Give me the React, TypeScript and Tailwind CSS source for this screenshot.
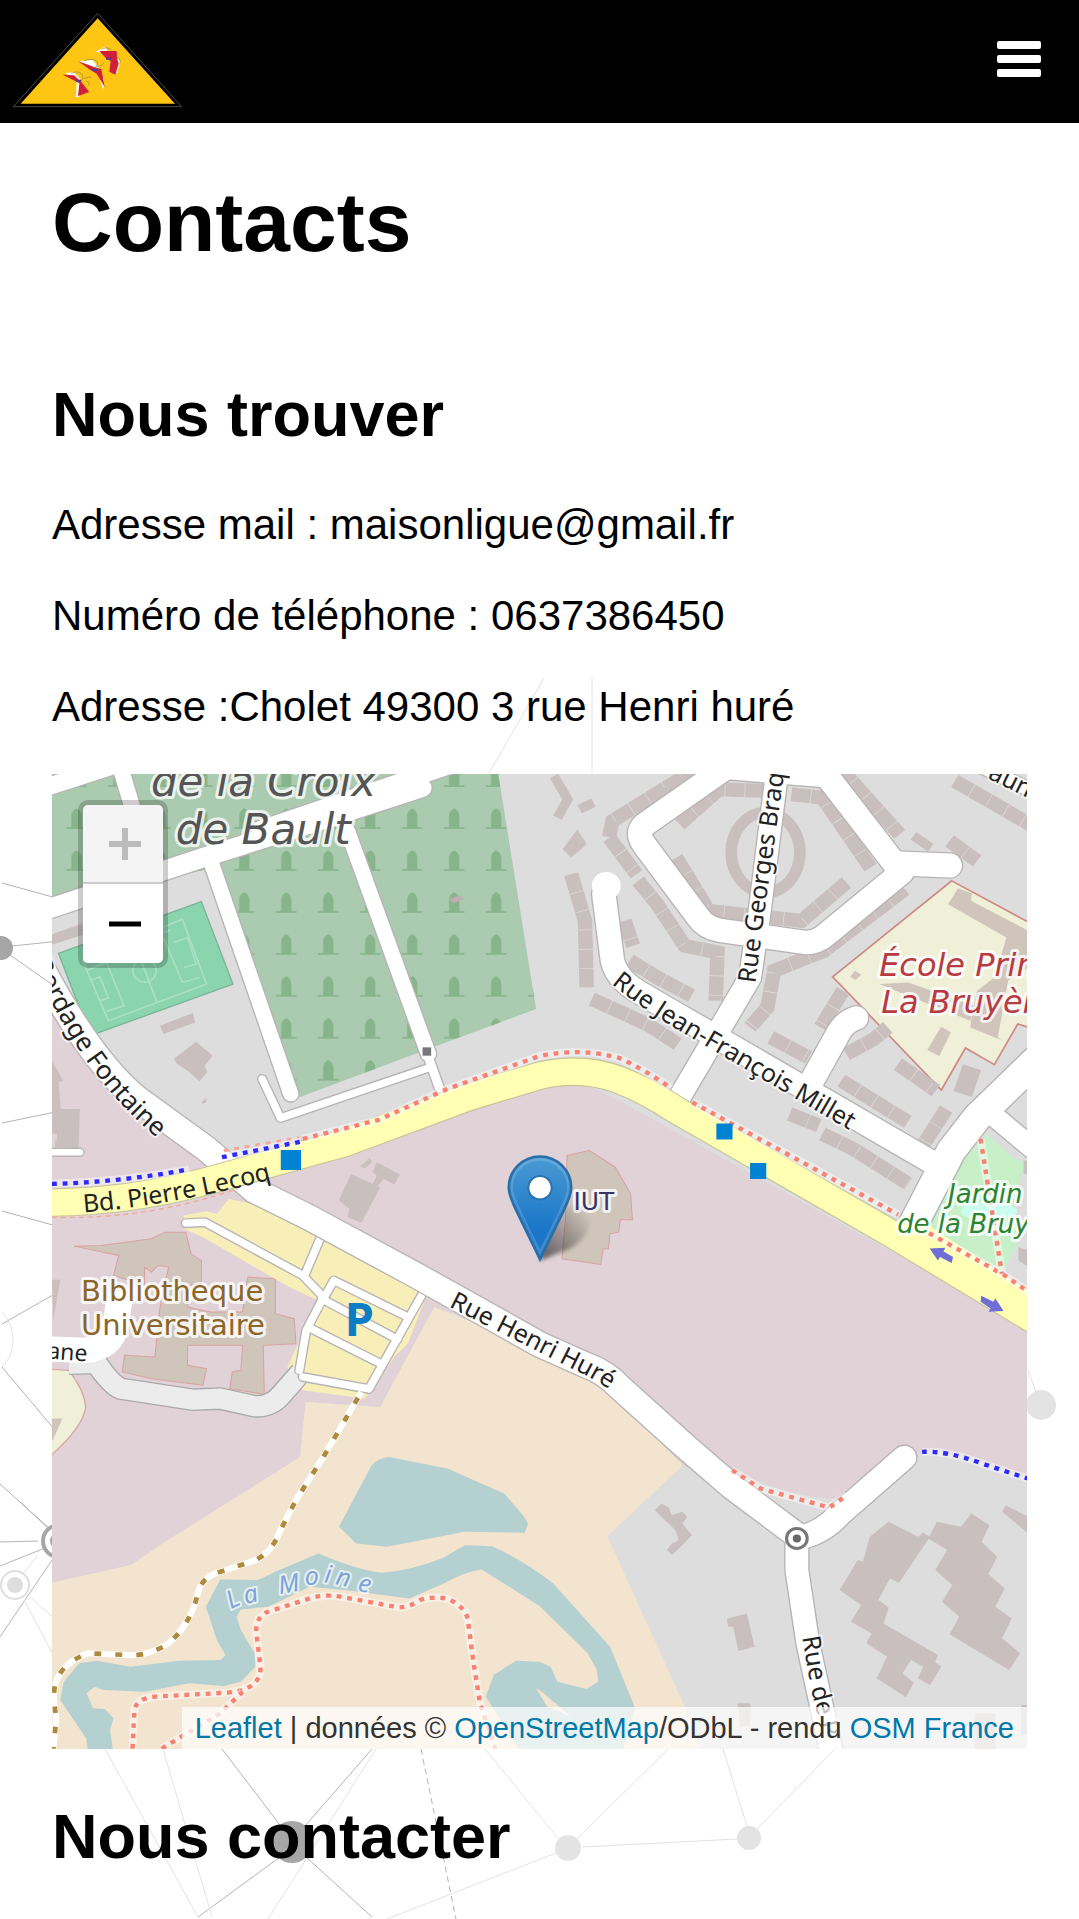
import React from "react";

const BUILDING = "#cabfbf";
const CAMPUS = "#cfc5bb";
const CASING = "#b8b4b4";

function Logo() {
  return (
    <svg viewBox="0 0 510 288" className="h-[96px] w-[170px]" role="img" aria-label="Maison des ligues">
      <g transform="translate(-36 -36)">
        <path d="M293 40L40 320H545Z" fill="#000" stroke="#4a4a4a" strokeWidth="3" />
        <path d="M293 55L62 311H525Z" fill="#fec613" />
        <g fill="#fff">
          <path d="M196 219l26-2 20 22-6 8zM230 246l10 4-2 40-10 2z" />
          <path d="M236 184l42-4 20 24-10 8zM300 238l12-4-2 38z" />
          <path d="M286 156l28-16 8 10-10 8zM346 170l14 14-8 34-12 8z" />
        </g>
        <g fill="#d0213a">
          <path d="M188 224l34 2 22 20 24 30-34 12 4-38-14-8z" />
          <path d="M234 183l48 18 22 6 10 54-24-40-20-12z" />
          <path d="M298 153l52 0 2 24 4 14-10 34-18-10 4-32-14-8z" />
        </g>
        <g fill="none" stroke="#7d8a4a" strokeWidth="2">
          <path d="M214 220q24-10 32 4t-8 20M252 236q16-8 22-4M258 244q14 0 8 14M252 182q24-8 36 0t-6 26M290 200q16 0 22-12M304 148q16-10 30 2M348 168q16 8 12 20" />
        </g>
        <path d="M228 242h16M276 210h16M318 176h16" stroke="#5a3a88" strokeWidth="6" />
      </g>
    </svg>
  );
}

function Network() {
  return (
    <svg
      viewBox="0 0 1079 1919"
      preserveAspectRatio="xMidYMin slice"
      className="absolute inset-0 -z-10 h-full w-full"
      aria-hidden="true"
      fill="none"
    >
      <path
        stroke="#b4b4b4"
        d="M2 883L60 899M12 946L60 941M10 955L60 990M2 1123L60 1111M2 1211L60 1227M2 1324L60 1291M2 1367L60 1436M0 1484L50 1529M18 1500L50 1530M0 1542L38 1541M0 1566L45 1548M52 1560L0 1637M222 1749L280 1825M372 1749L305 1826M198 1917L280 1857M372 1917L306 1857"
      />
      <path stroke="#b4b4b4" strokeDasharray="6 4" d="M421 1749L456 1919" />
      <path
        stroke="#e2e2e2"
        d="M544 678L489 773M592 678V773M2 1312Q14 1326 13 1342T2 1367M28 1595L56 1620M24 1600L56 1660M105 1749L198 1917M163 1749L212 1917M376 1749L268 1919M485 1749L558 1838M668 1749L578 1838M582 1847L737 1839M723 1749L747 1826M835 1749L757 1829M387 1919L556 1853M1028 1370L1036 1392M38 1555L22 1575"
      />
      <circle cx="1" cy="948" r="12" fill="#a6a6a6" />
      <circle cx="292" cy="1842" r="21" fill="#a6a6a6" />
      <circle cx="59" cy="1541" r="16" stroke="#a6a6a6" strokeWidth="4" />
      <circle cx="59" cy="1541" r="9" fill="#a6a6a6" />
      <circle cx="15" cy="1585" r="14" stroke="#dedede" strokeWidth="2" />
      <circle cx="15" cy="1585" r="8" fill="#dedede" />
      <circle cx="568" cy="1848" r="13" fill="#e3e3e3" />
      <circle cx="749" cy="1838" r="12" fill="#e3e3e3" />
      <circle cx="1041" cy="1405" r="15" fill="#e3e3e3" />
    </svg>
  );
}

type Street = { d: string; w: number };

const streets: Street[] = [
  { d: "M100 458L590 290L850 205L1225 80", w: 58 },
  { d: "M760 205L1400 -20", w: 52 },
  { d: "M100 90L340 10", w: 52 },
  { d: "M350 20L440 330", w: 46 },
  { d: "M612 300L845 1000", w: 44 },
  { d: "M1010 210L1245 880", w: 44 },
  { d: "M1245 890L1290 1020", w: 26 },
  { d: "M762 955L815 1072L1250 920", w: 22 },
  { d: "M110 1175H232", w: 20 },
  { d: "M110 600Q190 760 270 870T420 1030L600 1165L740 1290L900 1372L1210 1545L1568 1752L1698 1812Q1760 1835 1800 1880L1988 2055L2128 2180L2316 2325", w: 74 },
  { d: "M2316 2335Q2390 2320 2440 2262L2628 2092", w: 70 },
  { d: "M2316 2330V2430L2348 2650L2430 3040", w: 66 },
  { d: "M2058 15L2408 45", w: 70 },
  { d: "M2110 20L1875 190Q1845 215 1875 255L2030 470Q2050 500 2090 508L2340 545Q2375 545 2400 522L2620 335L2370 0", w: 70 },
  { d: "M2613 308L2760 314", w: 72 },
  { d: "M2265 -20L2208 450L2180 650L1975 1010", w: 64 },
  { d: "M1762 375L1755 400L1780 600Q1790 650 1850 690L2700 1200", w: 68 },
  { d: "M2488 772Q2450 785 2430 830L2360 960", w: 70 },
  { d: "M3040 870L2840 1070L2765 1170L2655 1390", w: 84 },
  { d: "M2870 1050L3020 1180", w: 60 },
  { d: "M2780 -20L3020 100", w: 40 },
];

const lots: Street[] = [
  { d: "M540 1388L595 1385L880 1545L940 1610L890 1710L870 1830", w: 22 },
  { d: "M932 1430L885 1545", w: 22 },
  { d: "M940 1615L970 1560L1185 1670", w: 22 },
  { d: "M935 1615L1155 1737", w: 22 },
  { d: "M905 1705L1110 1812", w: 22 },
  { d: "M880 1850L1072 1886L1225 1605", w: 22 },
];

function Streets({ items }: { items: Street[] }) {
  return (
    <g fill="none" strokeLinecap="round" strokeLinejoin="round">
      {items.map((s) => (
        <path key={s.d} d={s.d} stroke={CASING} strokeWidth={s.w + 8} />
      ))}
      {items.map((s) => (
        <path key={s.d} d={s.d} stroke="#fff" strokeWidth={s.w} />
      ))}
    </g>
  );
}

function Footway({ d, color }: { d: string; color: string }) {
  return (
    <g fill="none" strokeLinejoin="round">
      <path d={d} stroke="#fff" strokeOpacity="0.45" strokeWidth="24" />
      <path d={d} stroke={color} strokeWidth="13" strokeDasharray="14 17" />
    </g>
  );
}

function MapDrawing() {
  return (
    <svg viewBox="52 773 976 976" className="block h-full w-full" role="img" aria-label="Carte de Cholet, rue Henri Huré">
      <defs>
        <pattern id="graves" width="122" height="126" patternUnits="userSpaceOnUse" x="39" y="0">
          <path d="M31 78V73H46V40Q46 24 61 16Q76 24 76 40V73H91V78Z" fill="#88b48c" />
        </pattern>
        <path id="georges" d="M756 983L766 905L791 730" />
        <path id="millet" d="M612 983Q640 1006 680 1030L880 1147" />
        <path id="henri" d="M449 1306L570 1367Q600 1380 640 1410" />
        <path id="lecoq" d="M84 1212Q180 1204 290 1174" />
        <path id="fontaine" d="M-70 790L20 930Q70 1065 157 1137" />
        <path id="sud" d="M803 1637L812 1690L840 1800" />
      </defs>
      <rect x="52" y="773" width="976" height="976" fill="#dddddd" />
      <g transform="translate(0 760) scale(0.3444 0.3333)">
        <path d="M151 39H1448L1558 745L1270 855L870 1010L620 320L151 440Z" fill="#aacbaf" />
        <path d="M151 39H1448L1558 745L1270 855L870 1010L620 320L151 440Z" fill="url(#graves)" />
        <path d="M1305 415l30-12 14 12-30 12z" fill="#bcaead" />

        <path d="M120 660L260 830L350 960L640 1200L1000 1110L1568 960L1700 970L1800 1020L2988 1700V2155L2860 2110Q2740 2060 2640 2080L2440 2215Q2300 2215 2130 2130L1980 2120L1600 1760L1262 1640L1105 1940L888 1925L872 2090L480 2345L380 2415L120 2475Z" fill="#e0d2d7" />
        <path d="M1262 1640L1105 1940L888 1925L872 2090L480 2345L380 2415L120 2475V3000H2045L1990 2840L1765 2328L1985 2115L1700 1820Z" fill="#f3e4cf" />

        <g fill="#b5d0d0">
          <path d="M1130 2090L1300 2125L1465 2200L1520 2265L1535 2290L1525 2318L1350 2315L1125 2360L1035 2350L985 2300L1080 2115Q1100 2092 1130 2090Z" />
          <path d="M255 2970L250 2935L175 2820L185 2765L230 2710L280 2702L380 2720L520 2702L640 2700L655 2685L630 2640L598 2540L640 2458L750 2460L800 2435L925 2380Q1040 2430 1110 2438Q1200 2430 1290 2392L1350 2355L1430 2358Q1520 2400 1608 2470L1773 2660L1846 2845L1810 2970H1510L1412 2810L1435 2745L1500 2702L1568 2705L1600 2720L1620 2765L1705 2787L1738 2765L1735 2730L1708 2680L1568 2538L1400 2428Q1350 2435 1290 2470L1190 2515L1000 2490L900 2480L780 2540L700 2548L688 2570L700 2610L740 2680L742 2720L700 2765L650 2778L550 2770L420 2795L300 2790L275 2780L252 2800L270 2845L305 2847L330 2875L320 2910L328 2970Z" />
        </g>
        <path d="M1558 2785L1590 2840L1660 2870L1568 2790Z" fill="#f3e4cf" />

        <path d="M2766 360L3000 490V803L2958 790L2890 912L2806 862L2736 988L2420 648Z" fill="#f0f0d8" stroke="#d08a84" strokeWidth="5" />
        <g fill={CAMPUS}>
          <path d="M2785 382L2825 398L2822 420L2990 510V620L2930 660L2900 830L2910 838L2820 800L2825 760L2840 690L2890 650L2925 530L2755 430Z" />
          <path d="M2640 665L2830 735L2820 780L2555 670Z" />
          <path d="M2735 798L2764 815L2730 886L2695 868Z" />
          <path d="M2485 630l18 12-16 16-16-10z" />
        </g>
        <path d="M120 1825L200 1830Q245 1890 249 1940Q240 2010 120 2110Z" fill="#f0f0d8" stroke="#d9a7a4" strokeWidth="4" />
        <path d="M151 1975h30l-30 70z" fill={CAMPUS} />

        <path d="M2868 1120L2943 1190L2978 1205L2943 1340L2968 1420L2918 1535L2700 1400L2800 1200Z" fill="#c8f0c8" />
        <ellipse cx="2874" cy="1352" rx="82" ry="28" fill="#c9fdee" />

        <g fill={BUILDING}>
          <path d="M151 520L240 488V522L151 552Z" />
          <path d="M465 795L560 757L567 785L475 820Z" />
          <path d="M505 895L570 843L618 885L595 915L602 935L580 962L545 930L515 910Z" />
          <path d="M588 1022l14-10-4 14-12 4z" />
          <path d="M151 900L183 960L170 965L176 1045H232L228 1165L165 1155V1120L151 1118Z" />
          <path d="M160 1140h40v20h-40zM151 1558h24l-20 120z" />
          <path d="M1020 1240L1105 1280L1050 1387L1010 1370L1015 1345L985 1320ZM1095 1205L1162 1242L1147 1272L1115 1255L1090 1285L1080 1278L1095 1245L1083 1235ZM1075 1192l6 12-20 20-14-6z" />
          <path d="M1635 265L1678 205L1705 250L1660 290Z" />
          <g transform="translate(1568 2220)">
            <path fillRule="evenodd" d="M1015 65L1100 110L1115 98L1135 110L1045 248L1018 235L985 300L1015 322L1000 370L1158 465L1150 485L1168 500L1135 555L1100 535L1115 500L1080 480L1055 520L1088 548L1065 592L980 535L1010 470L950 430L965 400L905 365L935 315L872 270L925 180L940 185L960 110Z" />
            <path d="M1155 65L1225 80L1255 40L1308 75L1285 125L1330 170L1305 222L1352 265L1325 320L1372 355L1345 415L1397 460L1365 510L1192 403L1220 350L1170 305L1200 255L1150 210L1185 150L1130 115Z" />
            <path d="M1355 15L1420 50V100L1345 35Z" />
            <path d="M355 10L375 22L385 45L415 35L430 50L415 70L443 105L415 135L385 165L370 150L385 130L405 120L395 90L335 30Z" />
            <path d="M545 355L603 340L625 440L578 453L563 380L548 380ZM575 610h38v70h-30z" />
            <path d="M1265 640h60v110h-60zM1400 615h20v90h-20z" />
          </g>
          <path d="M2975 1200h20v40h-20zM2960 1460l30 10v50l-30-20z" />
        </g>
        <g fill="none" stroke={BUILDING} strokeWidth="42" strokeDasharray="56 2">
          <path d="M1905 125L1990 60M2030 20L1780 180L1770 230L1850 340M1855 360L1910 430L1990 555L2085 575L2080 720" />
          <path d="M1975 190L2090 85L2230 90M2300 100L2390 110L2530 320M1965 290L2060 450L2330 480L2460 365" />
          <path d="M2440 20L2615 220M2630 385L2395 570L2250 630L2230 740L2180 800" />
          <path d="M1660 340L1700 480L1705 680M1720 715L1880 790L1970 850M1830 600L1910 650L2010 705" />
          <path d="M1815 480L1840 555M2240 830L2350 890M2450 690L2385 800M2445 960L2640 1085M2460 880L2540 835L2580 800M2610 910L2720 990" />
          <path d="M2295 1060L2380 1095M2390 1120L2480 1165L2640 1270M2750 1045L2685 1150M2775 60L3010 200M2760 240L2840 300" />
        </g>
        <g fill="none" stroke={BUILDING} strokeWidth="34">
          <ellipse cx="2225" cy="275" rx="100" ry="120" />
          <path d="M2825 920L2798 1000" strokeWidth="56" />
          <path d="M1610 45L1650 115L1620 170M1685 145L1725 125M2655 225L2705 260" strokeWidth="28" />
        </g>

        <g fill={CAMPUS} stroke="#d9a2a0" strokeWidth="3">
          <path d="M215 1457L295 1455L440 1435L480 1415L540 1415L555 1480L585 1500V1570L550 1575L545 1640L610 1655L705 1655L720 1550L800 1555V1660L855 1675L860 1750L765 1755L768 1902L668 1885L675 1835L700 1830L705 1755H545V1815L600 1825L590 1875L440 1855L355 1835L362 1785L450 1790L465 1640L490 1520L460 1515L440 1535L420 1520V1575L330 1545L345 1485Z" />
          <path d="M1648 1185L1713 1170L1788 1220L1833 1300L1838 1378L1803 1378L1798 1415L1773 1420L1768 1465L1753 1465L1746 1512L1633 1495L1643 1380Z" />
        </g>

        <path d="M170 578L585 422L677 670L262 825Z" fill="#8ad4ae" stroke="#7bb497" strokeWidth="4" />
        <g fill="none" stroke="#a9e0c4" strokeWidth="5">
          <path d="M240 600L530 475L600 670L315 780ZM390 545L455 722M250 630L310 605L360 735L310 752M475 515L495 508M475 530L530 665L580 650M260 660L290 648L315 712L290 720M505 545L545 530L570 610L535 620" />
          <circle cx="420" cy="630" r="34" />
        </g>

        <path d="M665 1315L770 1340L1240 1605L1185 1750L1150 1785L1060 1915L880 1890L835 1820L925 1620L840 1580L590 1430L535 1405L533 1365L600 1352L630 1360Z" fill="#f7eeb8" />
        <path d="M200 1810L280 1808Q320 1870 350 1885L560 1918L640 1915L740 1938Q790 1940 820 1900L875 1835" fill="none" stroke="#aaa" strokeWidth="68" />
        <path d="M200 1810L280 1808Q320 1870 350 1885L560 1918L640 1915L740 1938Q790 1940 820 1900L880 1830" fill="none" stroke="#ececec" strokeWidth="60" />
        <path d="M110 1765L250 1770Q325 1760 335 1700L345 1630" fill="none" stroke="#fff" strokeWidth="76" strokeLinecap="round" />
        <Streets items={lots} />
        <Streets items={streets} />
        <circle cx="1762" cy="375" r="42" fill="#fff" />

        <g fill="none">
          <path d="M100 1326Q350 1330 600 1262L1000 1148L1360 1010L1568 945Q1690 915 1800 958Q1880 990 1960 1045L2600 1425L3040 1700" stroke="#c9c39c" strokeWidth="86" />
          <path d="M2578 1378L2700 1395L3000 1600V1690L2600 1425Z" fill="#ffffb3" />
          <path d="M100 1326Q350 1330 600 1262L1000 1148L1360 1010L1568 945Q1690 915 1800 958Q1880 990 1960 1045L2600 1425L3040 1700" stroke="#ffffb3" strokeWidth="79" />
        </g>
        <path d="M1228 860h25v25h-25z" fill="#777" />

        <Footway color="#fa8072" d="M880 1135L1100 1078L1300 985L1568 886Q1690 860 1800 892Q1870 925 1950 982" />
        <Footway color="#fa8072" d="M2012 1025L2610 1362" />
        <Footway color="#fa8072" d="M2700 1418L2920 1545L2990 1595" />
        <Footway color="#fa8072" d="M2850 1135L2912 1540" />
        <Footway color="#fa8072" d="M2128 2130L2210 2185L2410 2242L2462 2205" />
        <Footway color="#fa8072" d="M385 2966L390 2860Q390 2815 450 2810L660 2798Q760 2790 757 2720L745 2620Q740 2560 800 2548L900 2515Q950 2500 1000 2512L1160 2542Q1190 2542 1220 2520Q1270 2505 1310 2520Q1355 2545 1360 2580L1375 2700L1395 2830L1440 2966" />
        <Footway color="#fa8072" d="M470 2966L640 2860L705 2796" />
        <path d="M650 1170L870 1132" fill="none" stroke="#f7a79c" strokeWidth="10" strokeDasharray="14 17" />
        <Footway color="#2b2bff" d="M151 1270Q350 1265 550 1226M645 1190L875 1143" />
        <Footway color="#2b2bff" d="M2680 2075Q2750 2070 2860 2112L2990 2156" />
        <path d="M151 1370Q420 1380 690 1285" fill="none" stroke="#f3a79a" strokeWidth="4" strokeDasharray="14 12" />

        <g fill="none" strokeLinejoin="round">
          <path d="M1050 1895L940 2090L860 2220L815 2310Q790 2380 735 2403L640 2435Q585 2450 575 2500Q555 2590 490 2650Q430 2690 370 2685L255 2680Q150 2720 157 2820L163 2880L155 2966" stroke="#fff" strokeWidth="18" />
          <path d="M1050 1895L940 2090L860 2220L815 2310Q790 2380 735 2403L640 2435Q585 2450 575 2500Q555 2590 490 2650Q430 2690 370 2685L255 2680Q150 2720 157 2820L163 2880L155 2966" stroke="#ad8a3c" strokeWidth="14" strokeDasharray="20 41" strokeDashoffset="-20" />
        </g>

        <g fill="#0083d4">
          <path d="M816 1168h59v60h-59zM2082 1089h47v48h-47zM2180 1207h47v48h-47z" />
        </g>
        <g fill="#6e6ed6">
          <path d="M2702 1464L2748 1462L2742 1472L2770 1490L2766 1508L2732 1490L2726 1500Z" />
          <path d="M2917 1652L2873 1654L2879 1644L2850 1624L2852 1606L2887 1624L2893 1614Z" />
        </g>
        <circle cx="2316" cy="2335" r="30" fill="#fff" stroke="#777" strokeWidth="9" />
        <circle cx="2316" cy="2335" r="12" fill="#666" />
      </g>

      <g
        stroke="#fff"
        strokeOpacity="0.8"
        strokeWidth="6"
        strokeLinejoin="round"
        paintOrder="stroke"
        style={{ fontFamily: '"DejaVu Sans", sans-serif' }}
      >
        <g fontSize="42" fontStyle="italic" fill="#555">
          <text x="151" y="795">de la Croix</text>
          <text x="176" y="843">de Bault</text>
        </g>
        <g fontSize="32" fontStyle="italic" fill="#b83a42">
          <text x="880" y="975">École Prim</text>
          <text x="882" y="1012">La Bruyère</text>
        </g>
        <g fontSize="26" fontStyle="italic" fill="#2c8433">
          <text x="949" y="1202">Jardin</text>
          <text x="898" y="1232">de la Bruyère</text>
        </g>
        <g fontSize="29" fill="#8c6629">
          <text x="81" y="1301">Bibliotheque</text>
          <text x="81" y="1335">Universitaire</text>
        </g>
        <text x="574" y="1209" fontSize="25" fill="#3a3466">IUT</text>
      </g>
      <text x="345" y="1336" fontSize="47" fontWeight="700" fill="#0d7dc4" style={{ fontFamily: '"Noto Sans", sans-serif' }}>
        P
      </text>
      <g
        fontSize="25"
        fill="#222"
        stroke="#fff"
        strokeOpacity="0.7"
        strokeWidth="4"
        strokeLinejoin="round"
        paintOrder="stroke"
        style={{ fontFamily: '"Noto Sans", sans-serif' }}
      >
        <text><textPath href="#georges">Rue Georges Braque</textPath></text>
        <text><textPath href="#millet">Rue Jean-François Millet</textPath></text>
        <text><textPath href="#henri">Rue Henri Huré</textPath></text>
        <text strokeOpacity="0"><textPath href="#lecoq">Bd. Pierre Lecoq</textPath></text>
        <text textAnchor="end" fontSize="26"><textPath href="#fontaine" startOffset="100%">Bordage Fontaine</textPath></text>
        <text><textPath href="#sud">Rue de P</textPath></text>
        <text x="87" y="1361" fontSize="23" textAnchor="end" transform="rotate(4 87 1361)">ane</text>
        <text x="988" y="777" transform="rotate(26 988 777)">aun</text>
        <text
          x="231 246 280 305 324 335 357"
          y="1609 1604 1594 1585 1582 1584 1590"
          rotate="-25 -15 -10 0 8 12 15"
          fill="#7ba3dc"
          fontStyle="italic"
        >
          LaMoine
        </text>
      </g>
    </svg>
  );
}

function Marker() {
  return (
    <button
      type="button"
      aria-label="IUT"
      className="absolute top-1/2 left-1/2 h-[107px] w-[65px] -translate-x-1/2 -translate-y-full"
    >
      <svg viewBox="0 0 25 41" className="h-full w-full overflow-visible" aria-hidden="true">
        <defs>
          <linearGradient id="pin" x1="0" y1="0" x2="0" y2="1">
            <stop offset="0" stopColor="#4a9bd3" />
            <stop offset="0.7" stopColor="#1b76c8" />
          </linearGradient>
          <linearGradient id="shade" x1="0" y1="1" x2="1" y2="0">
            <stop offset="0" stopColor="#000" stopOpacity="0.6" />
            <stop offset="0.9" stopColor="#000" stopOpacity="0" />
          </linearGradient>
          <filter id="soft" x="-30%" y="-30%" width="160%" height="160%">
            <feGaussianBlur stdDeviation="0.8" />
          </filter>
        </defs>
        <path d="M12.5 40.5L16 26Q24 16 31 20Q34 30 24 36Z" fill="url(#shade)" filter="url(#soft)" />
        <path
          d="M12.5 .5C5.8 .5 .5 5.9 .5 12.4C.5 15.3 1.9 18.2 3.4 21.3L12.5 40L21.6 21.3C23.1 18.2 24.5 15.3 24.5 12.4C24.5 5.9 19.2 .5 12.5 .5Z"
          fill="url(#pin)"
          stroke="#2a6ea8"
        />
        <path
          d="M12.5 1.6C6.5 1.6 1.6 6.4 1.6 12.4C1.6 15.1 3 17.8 4.4 20.8L12.5 37.4L20.6 20.8C22 17.8 23.4 15.1 23.4 12.4C23.4 6.4 18.5 1.6 12.5 1.6Z"
          fill="none"
          stroke="#fff"
          strokeOpacity="0.15"
        />
        <circle cx="12.5" cy="12.5" r="4.5" fill="#fff" stroke="#2e73ad" strokeWidth="0.8" />
      </svg>
    </button>
  );
}

export default function App() {
  return (
    <div className="relative isolate min-h-screen overflow-hidden bg-white font-['Liberation_Sans',Arial,sans-serif] text-black">
      <Network />
      <header className="flex h-[123px] items-start justify-between bg-black pt-3 pr-[38px] pl-3">
        <a href="#accueil">
          <Logo />
        </a>
        <button type="button" aria-label="Menu" className="mt-[29px] flex w-11 flex-col gap-1.5">
          <span className="h-2 w-full rounded-xs bg-white" />
          <span className="h-2 w-full rounded-xs bg-white" />
          <span className="h-2 w-full rounded-xs bg-white" />
        </button>
      </header>
      <main className="px-[52px] pt-[51px]">
        <h1 className="text-[84px] leading-[96px] font-bold">Contacts</h1>
        <section className="mt-[108px]">
          <h2 className="text-[63px] leading-[72px] font-bold">Nous trouver</h2>
          <div className="mt-[51px] flex flex-col gap-[43px] text-[42px] leading-[48px]">
            <p>Adresse mail : maisonligue@gmail.fr</p>
            <p>Numéro de téléphone : 0637386450</p>
            <p>Adresse :Cholet 49300 3 rue Henri huré</p>
          </div>
          <div className="relative mt-[43px] aspect-square w-full overflow-hidden bg-[#dddddd]">
            <MapDrawing />
            <Marker />
            <div className="absolute top-[26px] left-[26px] flex flex-col rounded-[10px] border-[5px] border-black/20 bg-clip-padding">
              <button
                type="button"
                disabled
                aria-label="Zoom avant"
                className="flex h-[79px] w-20 items-center justify-center rounded-t-[5px] border-b-2 border-[#cccccc] bg-[#f4f4f4] pl-1 text-[#bbbbbb]"
              >
                <svg viewBox="0 0 32 32" className="h-8 w-8" aria-hidden="true">
                  <path d="M16 0V32M0 16H32" stroke="currentColor" strokeWidth="6" />
                </svg>
              </button>
              <button
                type="button"
                aria-label="Zoom arrière"
                className="flex h-[79px] w-20 items-center justify-center rounded-b-[5px] bg-white pl-1 text-black"
              >
                <svg viewBox="0 0 32 32" className="h-8 w-8" aria-hidden="true">
                  <path d="M0 16H32" stroke="currentColor" strokeWidth="5" />
                </svg>
              </button>
            </div>
            <div className="absolute right-0 bottom-0 bg-white/70 px-[13px] text-[29px] leading-[42px] text-[#333333]">
              <a href="#leaflet" className="text-[#0078a8]">Leaflet</a> | données ©{" "}
              <a href="#osm" className="text-[#0078a8]">OpenStreetMap</a>/ODbL - rendu{" "}
              <a href="#osm-france" className="text-[#0078a8]">OSM France</a>
            </div>
          </div>
        </section>
        <section className="mt-[51px]">
          <h2 className="text-[63px] leading-[72px] font-bold">Nous contacter</h2>
        </section>
      </main>
    </div>
  );
}
